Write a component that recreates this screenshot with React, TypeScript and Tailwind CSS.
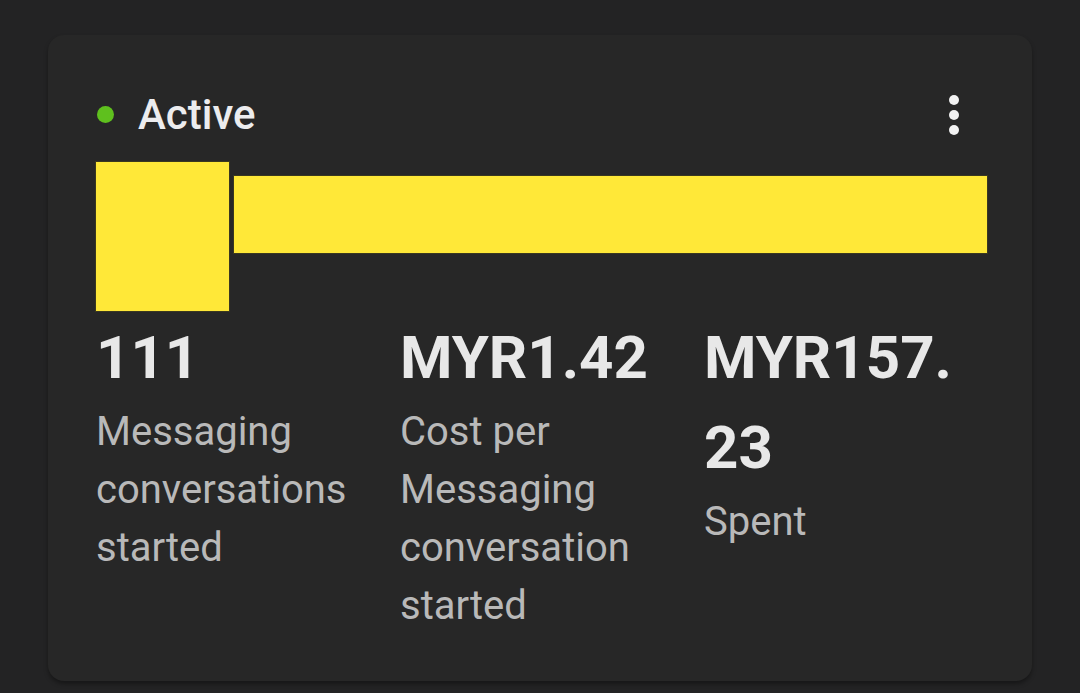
import React from 'react';

interface Stat {
    value: React.ReactNode;
    label: string;
}

const stats: Stat[] = [
    { value: '111', label: 'Messaging conversations started' },
    { value: 'MYR1.42', label: 'Cost per Messaging conversation started' },
    { value: <>MYR157.<wbr />23</>, label: 'Spent' },
];

const App: React.FC = () => {
    return (
        <div className="min-h-[693px] w-[1080px] bg-[#232324] pt-[35px] px-[48px] overflow-hidden" style={{ fontFamily: 'Roboto, "Noto Sans", sans-serif' }}>
            <div className="bg-[#272727] rounded-[16px] shadow-[0_3px_4px_rgba(0,0,0,0.35)] pt-[50px] pl-[48px] pr-[45px] pb-[46px]">
                {/* header */}
                <div className="flex items-center h-[56px] pt-[3px]">
                    <span className="w-[17px] h-[17px] rounded-full bg-[#5fc01e] ml-[1px]" />
                    <span className="ml-[24px] text-[42px] leading-[56px] font-medium text-[#ececee]">Active</span>
                    <button className="ml-auto mr-[28px] flex flex-col items-center gap-[5px]">
                        <span className="w-[10px] h-[10px] rounded-full bg-[#f2f2f2]" />
                        <span className="w-[10px] h-[10px] rounded-full bg-[#f2f2f2]" />
                        <span className="w-[10px] h-[10px] rounded-full bg-[#f2f2f2]" />
                    </button>
                </div>

                {/* redacted name */}
                <div className="flex items-start mt-[20px] -ml-[1px] -mr-[1px]">
                    <div className="w-[135px] h-[151px] bg-[#ffe838] border border-[#3a3820]" />
                    <div className="flex-1 h-[79px] mt-[14px] ml-[3px] bg-[#ffe838] border border-[#3a3820]" />
                </div>

                {/* stats */}
                <div className="grid grid-cols-3 gap-x-[21px] mt-[1px]">
                    {stats.map((s, i) => (
                        <div key={i}>
                            <div className="text-[60px] leading-[90px] font-bold text-[#e8e8e8]">{s.value}</div>
                            <div className="text-[40px] leading-[58px] text-[#b9b9b9]">{s.label}</div>
                        </div>
                    ))}
                </div>
            </div>
        </div>
    );
};

export default App;
